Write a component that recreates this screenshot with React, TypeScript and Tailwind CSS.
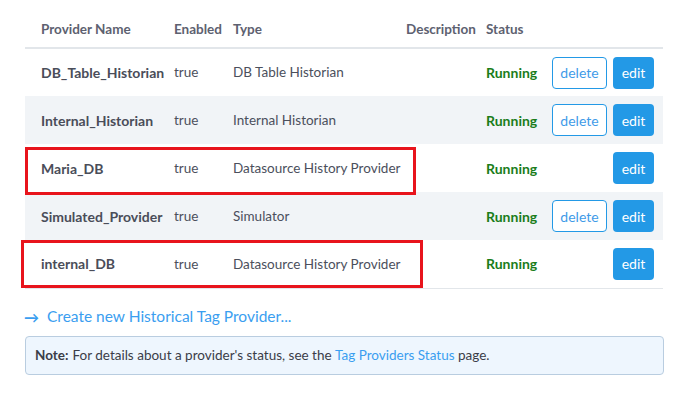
import React from 'react';

type Row = { name: string; type: string; canDelete: boolean; bg: string };

const rows: Row[] = [
  { name: 'DB_Table_Historian', type: 'DB Table Historian', canDelete: true, bg: 'bg-white' },
  { name: 'Internal_Historian', type: 'Internal Historian', canDelete: true, bg: 'bg-[#f1f4f7]' },
  { name: 'Maria_DB', type: 'Datasource History Provider', canDelete: false, bg: 'bg-white' },
  { name: 'Simulated_Provider', type: 'Simulator', canDelete: true, bg: 'bg-[#f1f4f7]' },
  { name: 'internal_DB', type: 'Datasource History Provider', canDelete: false, bg: 'bg-white' },
];

const App = () => {
  return (
    <div className="relative w-[689px] h-[399px] bg-white font-['Lato','Liberation_Sans',sans-serif] text-[13.5px] text-[#4b4f5c]">
      <div className="pl-[25px] w-[663px]">
        <table className="w-[638px] table-fixed border-collapse">
          <thead>
            <tr className="h-[48px] border-b-2 border-[#e2e6ea] text-[13.5px] font-bold text-[#5d6170]">
              <th className="w-[141px] pl-4 pb-[8px] text-left align-bottom">Provider Name</th>
              <th className="w-[59px] pl-2 pb-[8px] text-left align-bottom">Enabled</th>
              <th className="w-[173px] pl-2 pb-[8px] text-left align-bottom">Type</th>
              <th className="w-[80px] pl-2 pb-[8px] text-left align-bottom">Description</th>
              <th className="w-[66px] pl-2 pb-[8px] text-left align-bottom">Status</th>
              <th className="w-[119px]" />
            </tr>
          </thead>
          <tbody>
            {rows.map((r) => (
              <tr key={r.name} className={`h-[48px] ${r.bg}`}>
                <td className="pl-4 text-[14px] font-bold text-[#4a4d59] whitespace-nowrap">{r.name}</td>
                <td className="pl-2">true</td>
                <td className="pl-2 whitespace-nowrap">{r.type}</td>
                <td className="pl-2" />
                <td className="pl-2 text-[14px] font-bold text-[#1a7d1a]">Running</td>
                <td className="pr-[9px]">
                  <div className="flex justify-end gap-[6px] text-[14px]">
                    {r.canDelete && (
                      <button className="h-[32px] w-[55px] rounded-[4px] border border-[#2399e6] bg-white text-[#3f9be8]">
                        delete
                      </button>
                    )}
                    <button className="h-[32px] w-[41px] rounded-[4px] bg-[#2399e6] text-white">edit</button>
                  </div>
                </td>
              </tr>
            ))}
            <tr className="border-t border-[#e2e6ea]" />
          </tbody>
        </table>

        <div className="mt-[19px] flex items-center h-[20px] text-[15.5px] text-[#3a9ef0]">
          <span className="w-[23px] -ml-px text-[15px] font-bold">→</span>
          <span>Create new Historical Tag Provider...</span>
        </div>

        <div className="mt-[9px] h-[39px] w-[639px] flex items-center rounded-[4px] border border-[#b9cde0] bg-[#eef6fe] px-[9px] text-[13.5px] text-[#3a3d48]">
          <span className="font-bold mr-1">Note:</span>
          For details about a provider's status, see the&nbsp;
          <span className="text-[#3a9ef0]">Tag Providers Status</span>
          &nbsp;page.
        </div>
      </div>

      <div className="absolute left-[25px] top-[147px] w-[391px] h-[48px] border-[3px] border-[#e8141c]" />
      <div className="absolute left-[21px] top-[240px] w-[402px] h-[48px] border-[3px] border-[#e8141c]" />
    </div>
  );
};

export default App;
